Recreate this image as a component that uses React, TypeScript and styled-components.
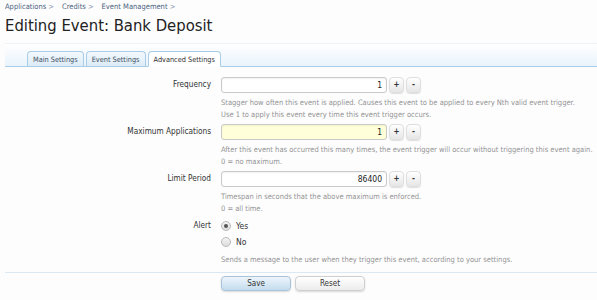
import { createGlobalStyle, styled } from "styled-components"

const GlobalStyle = createGlobalStyle`
    html, body {
        margin: 0;
        padding: 0;
        background: #fdfdfe;
    }
    body {
        font-family: "DejaVu Sans Condensed", "DejaVu Sans", sans-serif;
        color: #333;
    }
`

const Page = styled.div`
    width: 597px;
    height: 300px;
    overflow: hidden;
    padding: 0 0 0 5px;
    box-sizing: border-box;
`

const Crumbs = styled.div`
    display: flex;
    gap: 8px;
    padding-top: 2px;
    height: 11px;
    font-size: 7.5px;
    color: #4c6380;

    span::after {
        content: " >";
        color: #8a9bb0;
    }
`

const Title = styled.h1`
    margin: 2px 0 0;
    font-family: "DejaVu Sans Condensed", "DejaVu Sans", sans-serif;
    font-weight: normal;
    font-size: 16.5px;
    line-height: 22px;
    color: #222;
`

const TabStrip = styled.div`
    display: flex;
    align-items: flex-end;
    gap: 2px;
    height: 22px;
    margin-top: 6px;
    padding-left: 22px;
    border-top: 1px solid #f1f4f7;
    border-bottom: 1px solid #a9cde6;
    background: linear-gradient(#ffffff, #e9f4fc);
`

const Tab = styled.div<{ $active?: boolean }>`
    display: flex;
    align-items: center;
    height: 14px;
    padding: 0 5px;
    margin-bottom: ${p => (p.$active ? "-1px" : "0")};
    border: 1px solid #a9cde6;
    border-bottom: ${p => (p.$active ? "1px solid #fff" : "none")};
    border-radius: 4px 4px 0 0;
    background: ${p => (p.$active ? "#fff" : "linear-gradient(#f3f9fd, #dcebf7)")};
    font-size: 7.3px;
    color: ${p => (p.$active ? "#333" : "#3d4f63")};
`

const Form = styled.div`
    display: grid;
    grid-template-columns: 206px 1fr;
    column-gap: 10px;
    padding-top: 10px;
`

const Label = styled.div`
    text-align: right;
    font-size: 8.2px;
    line-height: 15px;
    color: #333;
`

const Field = styled.div<{ $gap?: number }>`
    padding-bottom: ${p => p.$gap ?? 4}px;
`

const SpinRow = styled.div`
    display: flex;
    align-items: center;
    gap: 2px;
`

const NumberBox = styled.div<{ $yellow?: boolean }>`
    width: 166px;
    height: 16px;
    box-sizing: border-box;
    padding-right: 4px;
    border: 1px solid #c9c9c9;
    border-radius: 3px;
    background: ${p => (p.$yellow ? "#ffffd9" : "#fff")};
    box-shadow: inset 0 1px 2px rgba(0, 0, 0, 0.06);
    text-align: right;
    font-size: 8.5px;
    line-height: 14px;
    color: #222;
`

const SpinButton = styled.div`
    width: 13px;
    height: 14px;
    border: 1px solid #dedede;
    border-radius: 4px;
    background: linear-gradient(#ffffff, #e6e6e6);
    box-shadow: 0 1px 1px rgba(0, 0, 0, 0.12);
    text-align: center;
    font-size: 8px;
    line-height: 13px;
    font-weight: bold;
    color: #333;
`

const Hint = styled.div`
    margin-top: 4px;
    font-size: 7.5px;
    line-height: 11.5px;
    color: #949494;
`

const Radio = styled.label`
    display: flex;
    align-items: center;
    gap: 5px;
    height: 16px;
    font-size: 8.5px;
    color: #333;
`

const Dot = styled.span<{ $checked?: boolean }>`
    position: relative;
    width: 8px;
    height: 8px;
    border: 1px solid #b9b9b9;
    border-radius: 50%;
    background: linear-gradient(#f4f4f4, #dcdcdc);

    &::after {
        content: "";
        display: ${p => (p.$checked ? "block" : "none")};
        position: absolute;
        left: 2px;
        top: 2px;
        width: 4px;
        height: 4px;
        border-radius: 50%;
        background: #555;
    }
`

const Divider = styled.div`
    height: 1px;
    margin-top: 6px;
    background: #dbe8f2;
`

const Actions = styled.div`
    display: flex;
    gap: 4px;
    padding: 3px 0 0 216px;
`

const Button = styled.div<{ $primary?: boolean }>`
    width: 70px;
    height: 15px;
    box-sizing: border-box;
    border: 1px solid ${p => (p.$primary ? "#a8c3d8" : "#cfcfcf")};
    border-radius: 4px;
    background: ${p => (p.$primary ? "linear-gradient(#eef5fb, #c4dcee)" : "linear-gradient(#ffffff, #ececec)")};
    box-shadow: 0 1px 2px rgba(0, 0, 0, 0.15);
    text-align: center;
    font-size: 8px;
    line-height: 13px;
    color: #333;
`

const Spinner = ({ value, yellow }: { value: string; yellow?: boolean }) => (
    <SpinRow>
        <NumberBox $yellow={yellow}>{value}</NumberBox>
        <SpinButton>+</SpinButton>
        <SpinButton>-</SpinButton>
    </SpinRow>
)

export default () => {
    return (
        <Page>
            <GlobalStyle />
            <Crumbs>
                <span>Applications</span>
                <span>Credits</span>
                <span>Event Management</span>
            </Crumbs>
            <Title>Editing Event: Bank Deposit</Title>
            <TabStrip>
                <Tab>Main Settings</Tab>
                <Tab>Event Settings</Tab>
                <Tab $active>Advanced Settings</Tab>
            </TabStrip>
            <Form>
                <Label>Frequency</Label>
                <Field>
                    <Spinner value="1" />
                    <Hint>
                        Stagger how often this event is applied. Causes this event to be applied to every Nth valid event trigger.
                        <br />
                        Use 1 to apply this event every time this event trigger occurs.
                    </Hint>
                </Field>

                <Label>Maximum Applications</Label>
                <Field>
                    <Spinner value="1" yellow />
                    <Hint>
                        After this event has occurred this many times, the event trigger will occur without triggering this event again.
                        <br />0 = no maximum.
                    </Hint>
                </Field>

                <Label>Limit Period</Label>
                <Field>
                    <Spinner value="86400" />
                    <Hint>
                        Timespan in seconds that the above maximum is enforced.
                        <br />0 = all time.
                    </Hint>
                </Field>

                <Label>Alert</Label>
                <Field $gap={0}>
                    <Radio>
                        <Dot $checked />
                        Yes
                    </Radio>
                    <Radio>
                        <Dot />
                        No
                    </Radio>
                    <Hint>Sends a message to the user when they trigger this event, according to your settings.</Hint>
                </Field>
            </Form>
            <Divider />
            <Actions>
                <Button $primary>Save</Button>
                <Button>Reset</Button>
            </Actions>
        </Page>
    )
}
